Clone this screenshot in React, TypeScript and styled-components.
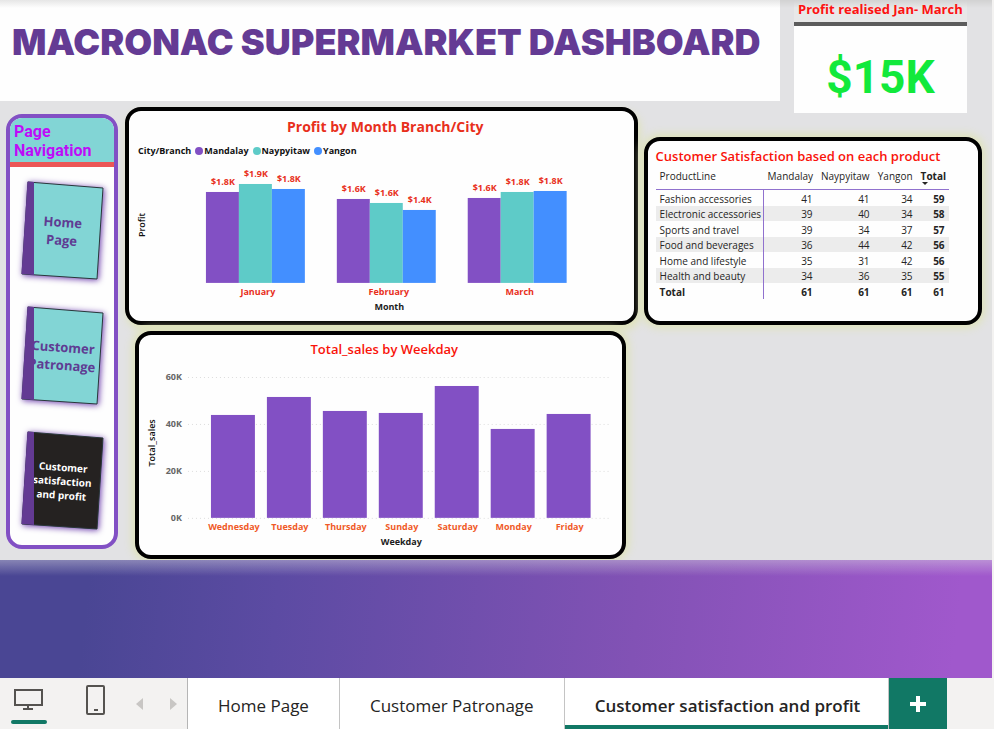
import React from "react";
import styled, { createGlobalStyle, css } from "styled-components";

const GlobalStyle = createGlobalStyle`
  *, *::before, *::after { box-sizing: border-box; }
  body { margin: 0; font-family: "Open Sans", "Noto Sans", sans-serif; }
  button, th, td { font-family: inherit; }
  h1, h2, h3, p { margin: 0; }
`;

const PURPLE = "#8250c4";
const TEAL = "#5ecbc8";
const BLUE = "#438fff";

const Page = styled.div`
  display: flex;
  flex-direction: column;
  min-height: 100vh;
  background: #f3f2f1;
`;

const Canvas = styled.main`
  flex: 1;
  display: flex;
  flex-direction: column;
  margin-right: 2px;
  overflow: hidden;
`;

const Report = styled.div`
  background: linear-gradient(#d2d2d2, rgba(226, 226, 228, 0) 8px), #e2e2e4;
`;

const Backdrop = styled.div`
  flex: 1;
  min-height: 100px;
  background:
    linear-gradient(rgba(226, 226, 228, 0.4), rgba(226, 226, 228, 0) 16px),
    linear-gradient(96deg, #4a4694 9%, #5c4ba3 28%, #8252b5 64%, #a058cc 96%);
`;

const Header = styled.header`
  display: grid;
  grid-template-columns: minmax(0, 780fr) minmax(0, 173fr);
  column-gap: 14px;
  align-items: start;
  padding-right: 25px;
`;

const TitleCard = styled.div`
  padding: 18px 12px 34px;
  background: linear-gradient(#e6e6e6, rgba(255, 255, 255, 0) 8px), #fefefe;
`;

const Title = styled.h1`
  font-family: Inter, sans-serif;
  font-size: 36px;
  line-height: 49px;
  font-weight: 900;
  color: #643b94;
  white-space: nowrap;
`;

const ProfitCard = styled.section`
  margin-bottom: -12px;
  background: #fefefe;
`;

const ProfitTitle = styled.h2`
  height: 26px;
  padding-left: 4px;
  border-bottom: 4px solid #5c5c5c;
  background: linear-gradient(#d2d2d2, #e8e8e8 8px);
  color: #fd1212;
  font-size: 13px;
  line-height: 18px;
  font-weight: 700;
  white-space: nowrap;
`;

const ProfitValue = styled.p`
  padding: 23px 0 8px;
  color: #12e93b;
  font-family: Roboto, sans-serif;
  font-size: 46px;
  line-height: 56px;
  font-weight: 700;
  text-align: center;
`;

const Body = styled.div`
  display: grid;
  grid-template-columns: 112px minmax(0, 513fr) minmax(0, 338fr);
  column-gap: 6px;
  align-items: start;
  padding: 6px 10px 1px 6px;
`;

const Charts = styled.div`
  display: flex;
  flex-direction: column;
  gap: 6px;
`;

const Panel = styled.section<{ $kind: "month" | "weekday" | "table" }>`
  border: 4px solid #000;
  border-radius: 16px;
  background: #fefefe;
  ${({ $kind }) =>
    $kind === "month" &&
    css`
      padding: 6px 0 7px;
      margin-left: 1px;
      box-shadow: 2px 5px 8px #dfe3b8;
    `}
  ${({ $kind }) =>
    $kind === "weekday" &&
    css`
      padding: 4px 0 6px;
      margin: 0 12px 0 11px;
      box-shadow: 0 0 9px 3px #dfe3b8;
    `}
  ${({ $kind }) =>
    $kind === "table" &&
    css`
      margin-top: 30px;
      padding: 5px 8px 22px;
      box-shadow: 0 0 9px 3px #dfe3b8;
    `}
`;

const PanelTitle = styled.h2`
  padding-left: 8px;
  color: #f9130a;
  font-size: 13px;
  line-height: 20px;
  font-weight: 600;
  white-space: nowrap;
  text-align: center;
`;

const MonthTitle = styled(PanelTitle)`
  color: #e8301c;
  font-size: 14px;
  font-weight: 700;
`;

const TableTitle = styled(PanelTitle)`
  padding-left: 0;
  text-align: left;
`;

const Legend = styled.ul`
  display: flex;
  align-items: center;
  gap: 4px;
  margin: 6px 0;
  padding: 0 0 0 9px;
  list-style: none;
  font-size: 9px;
  line-height: 16px;
  font-weight: 700;
  color: #111;
`;

const LegendItem = styled.li<{ $color?: string }>`
  display: flex;
  align-items: center;
  gap: 1px;
  ${({ $color }) =>
    $color &&
    css`
      &::before {
        content: "";
        width: 8px;
        height: 8px;
        border-radius: 50%;
        background: ${$color};
      }
    `}
`;

const Plot = styled.svg`
  display: block;
  width: 100%;
  height: auto;
  font-size: 9px;
  font-weight: 700;
  text-anchor: middle;
`;

const WeekdayPlot = styled(Plot)`
  margin-top: 6px;
`;

const AxisTitle = styled.p<{ $inset: number }>`
  padding-left: ${({ $inset }) => $inset}px;
  font-size: 9px;
  line-height: 14px;
  font-weight: 700;
  text-align: center;
  color: #1c1c1c;
`;

const Nav = styled.nav`
  margin-top: 7px;
  border: 4px solid ${PURPLE};
  border-radius: 16px;
  overflow: hidden;
  background: #fefefe;
`;

const NavTitle = styled.h2`
  padding: 4px 4px 2px;
  border-bottom: 5px solid #ec5656;
  background: #82d5d5;
  color: #be0cf8;
  font-family: Roboto, sans-serif;
  font-size: 16px;
  line-height: 19px;
  font-weight: 700;
`;

const BookList = styled.div`
  display: flex;
  flex-direction: column;
  align-items: center;
  gap: 25px;
  padding: 14px 0 14px 1px;
`;

const Book = styled.button<{ $dark?: boolean }>`
  position: relative;
  display: grid;
  place-items: center;
  width: 84px;
  height: 100px;
  padding: 0;
  border: 0;
  background: none;
  cursor: pointer;
  color: ${({ $dark }) => ($dark ? "#fff" : "#5f3c93")};
  font-size: ${({ $dark }) => ($dark ? 10 : 13)}px;
  line-height: ${({ $dark }) => ($dark ? 14 : 18)}px;
  font-weight: 700;
`;

const BookArt = styled.svg<{ $glow?: boolean }>`
  position: absolute;
  inset: 0;
  width: 84px;
  height: 100px;
  overflow: visible;
  filter: ${({ $glow }) => ($glow ? "drop-shadow(1px 1px 3px #6a3aab)" : "none")};
`;

const BookLabel = styled.span`
  position: relative;
  transform: rotate(4deg);
  white-space: pre;
`;

const Matrix = styled.table`
  width: 293px;
  border-collapse: separate;
  border-spacing: 0;
  table-layout: fixed;
  color: #252423;
  font-size: 10px;
  line-height: 14px;

  th, td {
    height: 16px;
    padding: 1px 4px 0;
    text-align: right;
    font-weight: 400;
    white-space: nowrap;
  }
  th:first-child {
    text-align: left;
    border-right: 1px solid #9071ce;
  }
  thead th {
    height: 24px;
    padding-bottom: 4px;
    border-bottom: 1px solid #9071ce;
  }
  thead th:first-child { border-right: 0; }
  tbody tr:nth-child(even) { background: #ececec; }
  tbody tr:nth-child(even) > * { height: 15px; }
  td:last-child, thead th:last-child, tfoot th, tfoot td { font-weight: 700; }
`;

const Col = styled.col<{ $w: number }>`
  width: ${({ $w }) => $w}px;
`;

const SortHead = styled.span`
  position: relative;
  &::after {
    content: "";
    position: absolute;
    left: 1px;
    top: 13px;
    border: 3px solid transparent;
    border-top-color: #252423;
    border-bottom: 0;
  }
`;

const Footer = styled.footer`
  display: flex;
  height: 51px;
  background: #f3f2f1;
`;

const ViewTools = styled.div`
  display: flex;
  gap: 20px;
  width: 188px;
  border-right: 1px solid #b5b5b5;
`;

const ViewButton = styled.button<{ $w: number; $active?: boolean }>`
  width: ${({ $w }) => $w}px;
  padding: 0;
  border: 0;
  background: none;
  cursor: pointer;
  svg { display: block; margin: 0 auto; }
  ${({ $active }) =>
    $active &&
    css`
      position: relative;
      &::after {
        content: "";
        position: absolute;
        left: 11px;
        bottom: 5px;
        width: 36px;
        height: 4px;
        border-radius: 2px;
        background: #117865;
      }
    `}
`;

const Tab = styled.button<{ $active?: boolean }>`
  padding: ${({ $active }) => ($active ? "4px 28px 0 30px" : "4px 30px 0")};
  border: 0;
  border-right: 1px solid #c4c4c4;
  background: #fff;
  box-shadow: inset 0 -4px ${({ $active }) => ($active ? "#117865" : "#fff")};
  color: #252423;
  font-size: 17px;
  line-height: 24px;
  font-weight: ${({ $active }) => ($active ? 600 : 400)};
  white-space: nowrap;
  cursor: pointer;
`;

const AddTab = styled.button`
  display: grid;
  place-items: center;
  width: 58px;
  padding: 0;
  border: 0;
  background: #117865;
  cursor: pointer;
`;

const months = [
  { name: "January", x: 77, bars: [[27, "$1.8K"], [19, "$1.9K"], [24, "$1.8K"]] },
  { name: "February", x: 208, bars: [[34, "$1.6K"], [38, "$1.6K"], [45, "$1.4K"]] },
  { name: "March", x: 339, bars: [[33, "$1.6K"], [27, "$1.8K"], [26, "$1.8K"]] },
] as { name: string; x: number; bars: [number, string][] }[];

const weekdays: [string, number][] = [
  ["Wednesday", 50], ["Tuesday", 32], ["Thursday", 46], ["Sunday", 48],
  ["Saturday", 21], ["Monday", 64], ["Friday", 49],
];

const rows: [string, number, number, number, number][] = [
  ["Fashion accessories", 41, 41, 34, 59],
  ["Electronic accessories", 39, 40, 34, 58],
  ["Sports and travel", 39, 34, 37, 57],
  ["Food and beverages", 36, 44, 42, 56],
  ["Home and lifestyle", 35, 31, 42, 56],
  ["Health and beauty", 34, 36, 35, 55],
];

function NavBook({ label, dark }: { label: string; dark?: boolean }) {
  return (
    <Book $dark={dark}>
      <BookArt $glow viewBox="0 0 84 100" aria-hidden="true">
        <path d="M7 1 L82 7 L76 98 L1 93 Z" fill={dark ? "#252221" : "#82d5d5"} stroke="#29383a" strokeWidth="1" />
      </BookArt>
      <BookLabel>{label}</BookLabel>
      <BookArt viewBox="0 0 84 100" aria-hidden="true">
        <path d="M6.500 .5 L13 1 V94 L.5 93 Z" fill="#633a93" />
      </BookArt>
    </Book>
  );
}

function MonthChart() {
  const colors = [PURPLE, TEAL, BLUE];
  return (
    <Plot viewBox="0 0 505 135" role="img" aria-label="Profit by month">
      <text transform="translate(16 60) rotate(-90)" fill="#111" fontWeight="600">Profit</text>
      {months.map((m) => (
        <g key={m.name} fill="#e8301c">
          {m.bars.map(([top, value], i) => (
            <g key={i}>
              <rect x={m.x + i * 33} y={top} width={33} height={118 - top} fill={colors[i]} />
              <text x={m.x + i * 33 + 17} y={top - 7}>{value}</text>
            </g>
          ))}
          <text x={m.x + 52} y={130}>{m.name}</text>
        </g>
      ))}
    </Plot>
  );
}

function WeekdayChart() {
  return (
    <WeekdayPlot viewBox="0 0 483 170" role="img" aria-label="Total sales by weekday">
      <text transform="translate(16 78) rotate(-90)" fill="#111" fontWeight="600">Total_sales</text>
      {["60K", "40K", "20K", "0K"].map((t, i) => (
        <g key={t}>
          <line x1="49" x2="472" y1={12.5 + i * 47} y2={12.5 + i * 47} stroke="#dcdcdc" strokeDasharray="1 3" />
          <text x="43" y={15 + i * 47} textAnchor="end" fill="#666">{t}</text>
        </g>
      ))}
      {weekdays.map(([day, top], i) => (
        <g key={day}>
          <rect x={72 + i * 56} y={top} width={44} height={153 - top} fill={PURPLE} />
          <text x={95 + i * 56} y={165} fill="#f05a28">{day}</text>
        </g>
      ))}
    </WeekdayPlot>
  );
}

export default function App() {
  return (
    <Page>
      <GlobalStyle />
      <Canvas>
        <Report>
          <Header>
            <TitleCard><Title>MACRONAC SUPERMARKET DASHBOARD</Title></TitleCard>
            <ProfitCard>
              <ProfitTitle>Profit realised Jan- March</ProfitTitle>
              <ProfitValue>$15K</ProfitValue>
            </ProfitCard>
          </Header>
          <Body>
            <Nav aria-label="Page navigation">
              <NavTitle>Page Navigation</NavTitle>
              <BookList>
                <NavBook label={"Home\nPage"} />
                <NavBook label={"Customer\nPatronage"} />
                <NavBook label={"Customer\nsatisfaction\nand profit"} dark />
              </BookList>
            </Nav>
            <Charts>
              <Panel $kind="month">
                <MonthTitle>Profit by Month Branch/City</MonthTitle>
                <Legend>
                  <LegendItem>City/Branch</LegendItem>
                  <LegendItem $color={PURPLE}>Mandalay</LegendItem>
                  <LegendItem $color={TEAL}>Naypyitaw</LegendItem>
                  <LegendItem $color={BLUE}>Yangon</LegendItem>
                </Legend>
                <MonthChart />
                <AxisTitle $inset={16}>Month</AxisTitle>
              </Panel>
              <Panel $kind="weekday">
                <PanelTitle>Total_sales by Weekday</PanelTitle>
                <WeekdayChart />
                <AxisTitle $inset={42}>Weekday</AxisTitle>
              </Panel>
            </Charts>
            <Panel $kind="table">
              <TableTitle>Customer Satisfaction based on each product</TableTitle>
              <Matrix>
                <colgroup>
                  <Col $w={108} /><Col $w={53} /><Col $w={57} /><Col $w={43} /><Col $w={32} />
                </colgroup>
                <thead>
                  <tr>
                    <th scope="col">ProductLine</th>
                    <th scope="col">Mandalay</th>
                    <th scope="col">Naypyitaw</th>
                    <th scope="col">Yangon</th>
                    <th scope="col" aria-sort="descending"><SortHead>Total</SortHead></th>
                  </tr>
                </thead>
                <tbody>
                  {rows.map(([name, ...values]) => (
                    <tr key={name}>
                      <th scope="row">{name}</th>
                      {values.map((v, i) => <td key={i}>{v}</td>)}
                    </tr>
                  ))}
                </tbody>
                <tfoot>
                  <tr><th scope="row">Total</th><td>61</td><td>61</td><td>61</td><td>61</td></tr>
                </tfoot>
              </Matrix>
            </Panel>
          </Body>
        </Report>
        <Backdrop />
      </Canvas>
      <Footer>
        <ViewTools>
          <ViewButton $w={56} $active aria-label="Desktop layout">
            <svg width="30" height="34" viewBox="0 0 30 34" fill="none" stroke="#555350" strokeWidth="2">
              <path d="M2 3H29V18H2ZM15 18V22M10 22H20" />
            </svg>
          </ViewButton>
          <ViewButton $w={38} aria-label="Mobile layout">
            <svg width="20" height="38" viewBox="0 0 20 38" fill="none" stroke="#555350" strokeWidth="2">
              <rect x="2" y="1" width="17" height="28" rx="1" />
              <path d="M9 25H13" />
            </svg>
          </ViewButton>
          <ViewButton $w={12} aria-label="Previous page">
            <svg width="8" height="14" viewBox="0 0 8 14"><path d="M7 1V13L0 7Z" fill="#c8c6c4" /></svg>
          </ViewButton>
          <ViewButton $w={14} aria-label="Next page">
            <svg width="8" height="14" viewBox="0 0 8 14"><path d="M1 1V13L8 7Z" fill="#c8c6c4" /></svg>
          </ViewButton>
        </ViewTools>
        <Tab>Home Page</Tab>
        <Tab>Customer Patronage</Tab>
        <Tab $active aria-current="page">Customer satisfaction and profit</Tab>
        <AddTab aria-label="Add page">
          <svg width="18" height="18" viewBox="0 0 18 18"><path d="M9 1V17M1 9H17" stroke="#fff" strokeWidth="4" /></svg>
        </AddTab>
      </Footer>
    </Page>
  );
}
